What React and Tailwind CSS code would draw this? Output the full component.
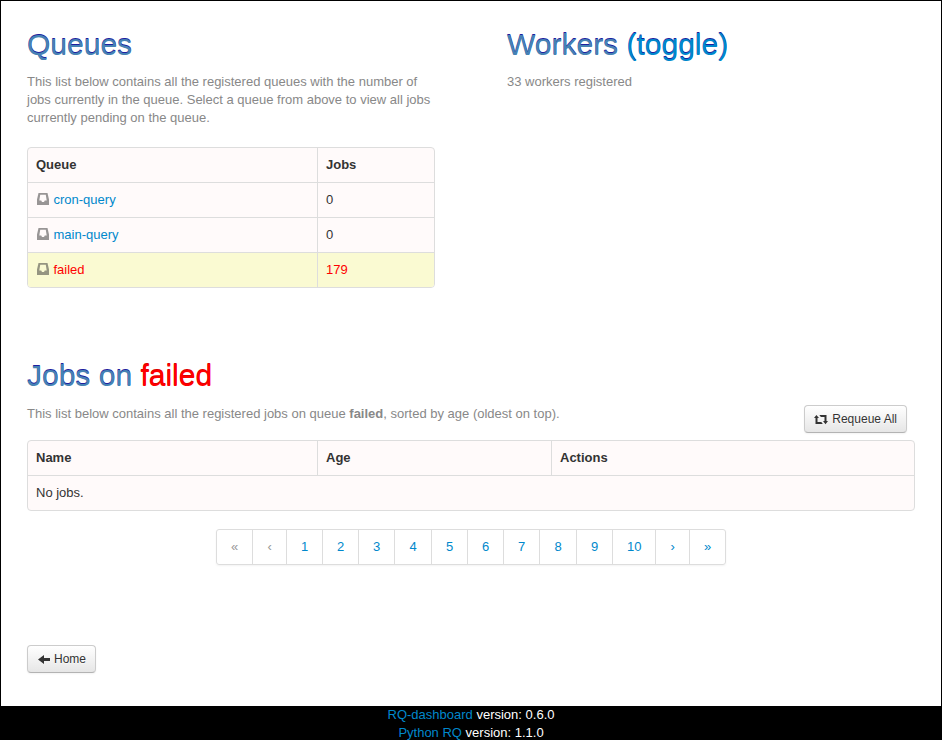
const inboxPath =
  "M1.5 0h9L12 6.5V12H0V6.5zM3.2 1.7L2.3 7.4h1.9L5 9h2l.8-1.6h1.9L8.8 1.7z";

function Inbox() {
  return (
    <svg className="mr-[4.5px] ml-[1px] inline-block h-3 w-3 align-[-1px] opacity-50" viewBox="0 0 12 12">
      <path fill="#333" fillRule="evenodd" d={inboxPath} />
    </svg>
  );
}

function Button({ children }) {
  return (
    <a className="inline-flex h-7 items-center rounded-[4px] border border-[#ccc] border-b-[#b3b3b3] bg-linear-to-b from-white to-[#e6e6e6] px-[9px] text-[12px] leading-[18px] text-[#333] shadow-[inset_0_1px_0_rgba(255,255,255,0.2),0_1px_2px_rgba(0,0,0,0.05)] [text-shadow:0_1px_1px_rgba(255,255,255,0.75)]">
      {children}
    </a>
  );
}

const h1 = "text-[30px] leading-9 text-[#4682b4] [text-shadow:0_-1px_0_#1f1fa0]";
const lead = "text-[#888]";
const cell = "h-[35px] border-[#ddd] px-2 pb-px flex items-center";
const link = "text-[#0088cc]";

const queues = [
  { name: "cron-query", jobs: 0 },
  { name: "main-query", jobs: 0 },
  { name: "failed", jobs: 179, failed: true },
];

const pages = [
  ["«", "w-[36px] text-[#999]"],
  ["‹", "w-[34px] text-[#999]"],
  ["1", "w-[36px]"],
  ["2", "w-[36px]"],
  ["3", "w-[36px]"],
  ["4", "w-[37px]"],
  ["5", "w-[36px]"],
  ["6", "w-[36px]"],
  ["7", "w-[36px]"],
  ["8", "w-[37px]"],
  ["9", "w-[36px]"],
  ["10", "w-[43px]"],
  ["›", "w-[34px]"],
  ["»", "w-[35px]"],
];

export default function App() {
  return (
    <div className="flex h-[740px] w-[942px] flex-col overflow-hidden bg-black font-['Liberation_Sans',Arial,sans-serif] text-[13px] leading-[18px] text-[#333]">
      <main className="mx-px mt-px h-[705px] shrink-0 bg-white px-[26px] pt-[26px]">
        <div className="flex h-[331px] gap-[72px]">
          <section className="w-[408px]">
            <h1 className={h1}>Queues</h1>
            <p className={"mt-[10px] " + lead}>
              This list below contains all the registered queues with the number of jobs currently in the queue. Select
              a queue from above to view all jobs currently pending on the queue.
            </p>
            <div className="mt-[20px] overflow-hidden rounded-[4px] border border-[#ddd] bg-[snow]">
              <div className="grid h-[34px] grid-cols-[289px_1fr] font-bold">
                <div className={cell}>Queue</div>
                <div className={cell + " border-l"}>Jobs</div>
              </div>
              {queues.map((q) => (
                <div
                  key={q.name}
                  className={
                    "grid grid-cols-[289px_1fr] border-t border-[#ddd] h-[35px] " +
                    (q.failed ? "bg-[#fafad2] text-[red]" : "")
                  }
                >
                  <div className="flex items-center px-2">
                    <span>
                      <Inbox />
                      <a className={q.failed ? "text-[red]" : link}>{q.name}</a>
                    </span>
                  </div>
                  <div className="flex items-center border-l border-[#ddd] px-2">{q.jobs}</div>
                </div>
              ))}
            </div>
          </section>
          <section>
            <h1 className={h1}>
              Workers <a className={link}>(toggle)</a>
            </h1>
            <p className={"mt-[10px] " + lead}>33 workers registered</p>
          </section>
        </div>

        <section>
          <h1 className={h1}>
            Jobs on <span className="text-[red] [text-shadow:0_-1px_0_#d00]">failed</span>
          </h1>
          <div className="flex h-[46px] items-start justify-between pr-2">
            <p className={"mt-[11px] " + lead}>
              This list below contains all the registered jobs on queue <b>failed</b>, sorted by age (oldest on top).
            </p>
            <div className="mt-[11px] flex">
              <Button>
                <svg className="mt-px mr-1 h-[10px] w-[14px]" viewBox="0 0 14 10">
                  <path fill="#333" d="M2.4 0L5 3H3.5V7H7.3L8.8 9H1.5V3H0zM5.3 0H12.5V6H14L11.5 9.2L9 6H10.5V2H6.9z" />
                </svg>
                Requeue All
              </Button>
            </div>
          </div>
          <div className="overflow-hidden rounded-[4px] border border-[#ddd] bg-[snow]">
            <div className="grid h-[34px] grid-cols-[289px_234px_1fr] font-bold">
              <div className={cell}>Name</div>
              <div className={cell + " border-l"}>Age</div>
              <div className={cell + " border-l"}>Actions</div>
            </div>
            <div className="flex h-[35px] items-center border-t border-[#ddd] px-2">No jobs.</div>
          </div>
          <nav className="mt-[18px] flex pl-[189px]">
            <div className="flex rounded-[3px] border border-[#ddd] shadow-[0_1px_2px_rgba(0,0,0,0.05)]">
              {pages.map(([label, style], i) => (
                <a
                  key={label}
                  className={
                    "h-[34px] text-center leading-[34px] pl-[0.4px] border-[#ddd] " +
                    (i < 13 ? "border-r " : "") +
                    (i > 1 ? "text-[#0088cc] " : "") +
                    style
                  }
                >
                  {label}
                </a>
              ))}
            </div>
          </nav>
        </section>
        <div className="mt-[80px] flex">
          <Button>
            <svg className="ml-px mt-px mr-[4px] h-[9px] w-[12px]" viewBox="0 0 12 9">
              <path fill="#333" d="M0 4.5L6 0V3H12V6H6V9z" />
            </svg>
            Home
          </Button>
        </div>
      </main>
      <footer className="text-center text-white">
        <div>
          <a className={link}>RQ-dashboard</a> version: 0.6.0
        </div>
        <div>
          <a className={link}>Python RQ</a> version: 1.1.0
        </div>
      </footer>
    </div>
  );
}
